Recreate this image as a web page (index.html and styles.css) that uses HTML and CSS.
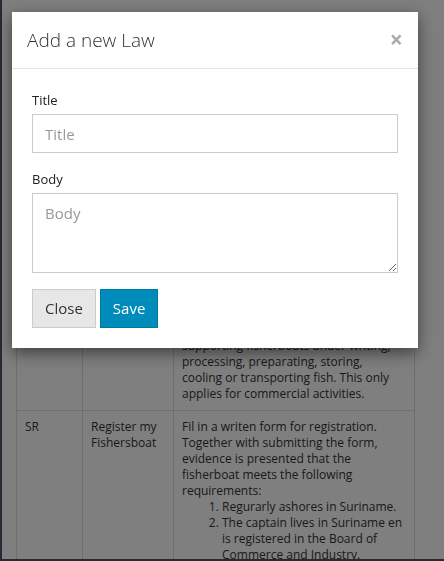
FILE: index.html
```html
<!DOCTYPE html>
<html lang="en">
<head>
<meta charset="utf-8">
<title>Add a new Law</title>
<link rel="stylesheet" href="styles.css">
</head>
<body>
<div class="frame">
  <table class="laws">
    <colgroup>
      <col class="c-country">
      <col class="c-name">
      <col class="c-body">
    </colgroup>
    <tbody>
      <tr>
        <td>SR</td>
        <td>Fishing licence</td>
        <td>A licence is required for the use of fisherboats and of boats<br>supporting fisherboats under writing, processing, preparating, storing,<br>cooling or transporting fish. This only applies for commercial activities.</td>
      </tr>
      <tr>
        <td>SR</td>
        <td>Register my Fishersboat</td>
        <td>Fil in a writen form for registration. Together with submitting the form, evidence is presented that the fisherboat meets the following requirements:
          <ol>
            <li>Regurarly ashores in Suriname.</li>
            <li>The captain lives in Suriname en is registered in the Board of Commerce and Industry.</li>
            <li>The boat is registered with the Ministry.</li>
          </ol>
        </td>
      </tr>
    </tbody>
  </table>
</div>
<div class="backdrop"></div>
<div class="modal">
  <div class="modal-header">
    <h4 class="modal-title">Add a new Law</h4>
    <button class="close" type="button">&times;</button>
  </div>
  <form class="modal-body">
    <div class="form-group">
      <label class="label" for="title">Title</label>
      <input class="input" id="title" type="text" placeholder="Title">
    </div>
    <div class="form-group">
      <label class="label" for="body">Body</label>
      <textarea class="input textarea" id="body" placeholder="Body"></textarea>
    </div>
    <div class="actions">
      <button class="btn btn-default" type="button">Close</button>
      <button class="btn btn-primary" type="button">Save</button>
    </div>
  </form>
</div>
</body>
</html>
```

FILE: styles.css
```css
* { box-sizing: border-box; }

html, body {
  margin: 0;
  padding: 0;
  height: 100%;
  overflow: hidden;
  background: #4c5566;
}

body {
  font-family: "Open Sans", "DejaVu Sans", sans-serif;
  color: #333;
}

.frame {
  margin-left: 2px;
  height: 559px;
  background: #fff;
  padding: 297px 0 0 14px;
  overflow: hidden;
}

.laws {
  border-collapse: collapse;
  table-layout: fixed;
  width: 398px;
  font-size: 12px;
  line-height: 16px;
  color: #333;
}

.c-country { width: 66px; }
.c-name { width: 91px; }
.c-body { width: 241px; }

.laws td {
  border: 1px solid #ddd;
  padding: 8px;
  vertical-align: top;
}

.laws ol {
  margin: 0;
  padding-left: 40px;
}

.backdrop {
  position: fixed;
  inset: 0;
  background: rgba(0, 0, 0, 0.5);
}

.modal {
  position: absolute;
  left: 12px;
  top: 12px;
  width: 406px;
  background: #fff;
  box-shadow: 0 5px 15px rgba(0, 0, 0, 0.5);
}

.modal-header {
  display: flex;
  justify-content: space-between;
  align-items: flex-start;
  padding: 15px;
  border-bottom: 1px solid #e5e5e5;
}

.modal-title {
  margin: 0;
  font-size: 19px;
  line-height: 26px;
  font-weight: 300;
  color: #333;
}

.close {
  border: 0;
  background: none;
  padding: 0;
  margin: 1px 0 0 0;
  font-family: "Open Sans", sans-serif;
  font-size: 23px;
  font-weight: 700;
  line-height: 1;
  color: #aaa;
  cursor: pointer;
}

.modal-body {
  display: block;
  margin: 0;
  padding: 20px;
}

.form-group {
  margin-bottom: 15px;
}

.label {
  display: block;
  font-size: 13px;
  line-height: 22px;
  margin-bottom: 3px;
  color: #222;
}

.input {
  display: block;
  width: 100%;
  height: 39px;
  margin: 0;
  padding: 0 12px;
  border: 1px solid #ccc;
  border-radius: 0;
  background: #fff;
  font-family: "Open Sans", sans-serif;
  font-size: 15px;
  color: #333;
  outline: none;
}

.input::placeholder {
  color: #999;
}

.textarea {
  height: 80px;
  padding: 8px 12px;
  line-height: 22px;
  resize: vertical;
}

.actions {
  display: flex;
  gap: 4px;
  padding-top: 1px;
}

.btn {
  height: 39px;
  padding: 0 12px;
  border: 1px solid;
  border-radius: 0;
  font-family: "Open Sans", sans-serif;
  font-size: 15px;
  line-height: 1;
  cursor: pointer;
}

.btn-default {
  background: #e7e7e7;
  border-color: #cccccc;
  color: #333;
}

.btn-primary {
  background: #008cba;
  border-color: #0079a1;
  color: #fff;
}
```
